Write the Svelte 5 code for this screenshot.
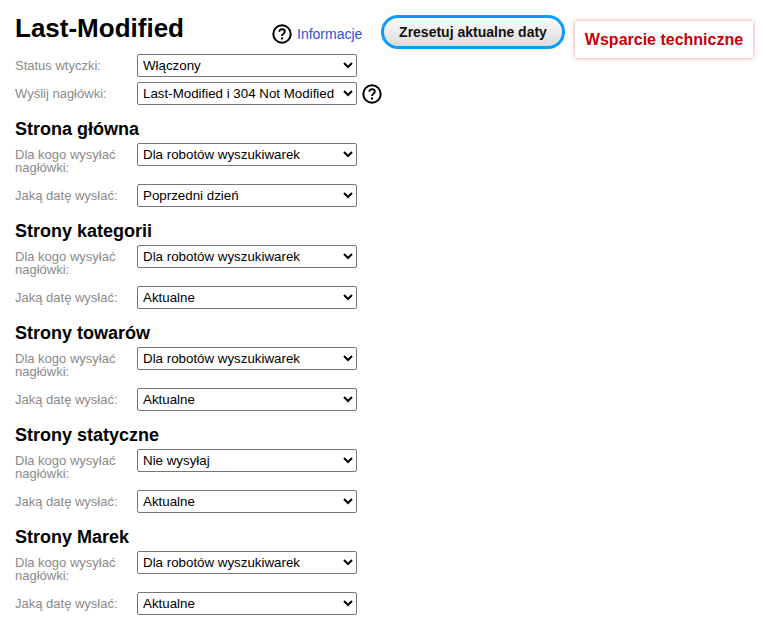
<script>
  const sections = [
    { title: 'Strona główna', who: 'Dla robotów wyszukiwarek', date: 'Poprzedni dzień' },
    { title: 'Strony kategorii', who: 'Dla robotów wyszukiwarek', date: 'Aktualne' },
    { title: 'Strony towarów', who: 'Dla robotów wyszukiwarek', date: 'Aktualne' },
    { title: 'Strony statyczne', who: 'Nie wysyłaj', date: 'Aktualne' },
    { title: 'Strony Marek', who: 'Dla robotów wyszukiwarek', date: 'Aktualne' }
  ];
</script>

{#snippet help()}
  <svg class="help" width="20" height="20" viewBox="0 0 20 20" aria-hidden="true">
    <circle cx="10" cy="10" r="8.7" fill="#fff" stroke="#000" stroke-width="2" />
    <path d="M7.3 7.8c0-1.6 1.2-2.6 2.8-2.6s2.7 1 2.7 2.3c0 2.2-2.8 2.2-2.8 4.4" fill="none" stroke="#000" stroke-width="1.9" />
    <rect x="9" y="13.4" width="2.1" height="2.1" fill="#000" />
  </svg>
{/snippet}

<div class="page">
  <header class="top">
    <h1>Last-Modified</h1>
    <div class="info">
      {@render help()}
      <a href="#info">Informacje</a>
    </div>
    <button class="reset" type="button">Zresetuj aktualne daty</button>
    <a class="support" href="#support">Wsparcie techniczne</a>
  </header>

  <div class="row first">
    <label for="status">Status wtyczki:</label>
    <select id="status"><option>Włączony</option></select>
  </div>
  <div class="row">
    <label for="headers">Wyślij nagłówki:</label>
    <select id="headers"><option>Last-Modified i 304 Not Modified</option></select>
    {@render help()}
  </div>

  {#each sections as s, i}
    <section>
      <h2>{s.title}</h2>
      <div class="row">
        <label class="two-line" for="who{i}">Dla kogo wysyłać nagłówki:</label>
        <select id="who{i}"><option>{s.who}</option></select>
      </div>
      <div class="row date">
        <label for="date{i}">Jaką datę wysłać:</label>
        <select id="date{i}"><option>{s.date}</option></select>
      </div>
    </section>
  {/each}
</div>

<style>
  :global(body) {
    background: #fff;
    font-family: "Liberation Sans", Arial, sans-serif;
  }

  .page {
    padding: 0 15px;
  }

  .top {
    display: flex;
    align-items: flex-start;
    height: 54px;
  }

  .top > * {
    flex: none;
    box-sizing: border-box;
  }

  h1 {
    margin: 12px 0 0;
    width: 257px;
    font-size: 26px;
    line-height: 32px;
    font-weight: bold;
    color: #000;
  }

  .info {
    display: flex;
    align-items: center;
    gap: 5px;
    margin-top: 24px;
    width: 109px;
  }

  .info a {
    color: #3050d8;
    font-size: 14px;
    text-decoration: none;
  }

  .reset {
    margin-top: 15px;
    width: 184px;
    height: 34px;
    padding: 0;
    border: 3px solid #0a9bff;
    border-radius: 17px;
    background: linear-gradient(#fbfbfb, #dcdcdc);
    color: #111;
    font-family: inherit;
    font-size: 14px;
    font-weight: bold;
    cursor: pointer;
  }

  .support {
    margin: 21px 0 0 10px;
    width: 178px;
    height: 37px;
    line-height: 37px;
    text-align: center;
    background: #fff;
    color: #c8000a;
    font-size: 16px;
    font-weight: bold;
    text-decoration: none;
    box-shadow: 0 0 4px rgba(200, 0, 10, 0.45);
  }

  .row {
    display: flex;
    align-items: center;
    gap: 5px;
    margin-bottom: 5px;
  }

  label {
    width: 117px;
    flex: none;
    color: #8a8a8a;
    font-size: 13px;
    line-height: 13px;
  }

  .two-line {
    padding-top: 13px;
  }

  select {
    width: 220px;
    height: 23px;
    padding: 0 0 0 1px;
    border: 1px solid #767676;
    border-radius: 2px;
    background: #fff;
    color: #000;
    font-family: inherit;
    font-size: 13.33px;
  }

  section {
    height: 102px;
  }

  h2 {
    margin: 0;
    height: 28px;
    padding-top: 3px;
    box-sizing: border-box;
    font-size: 18px;
    line-height: 22px;
    color: #000;
  }

  section .row {
    margin-bottom: 18px;
    height: 23px;
  }

  section:first-of-type {
    margin-top: 10px;
  }
</style>
